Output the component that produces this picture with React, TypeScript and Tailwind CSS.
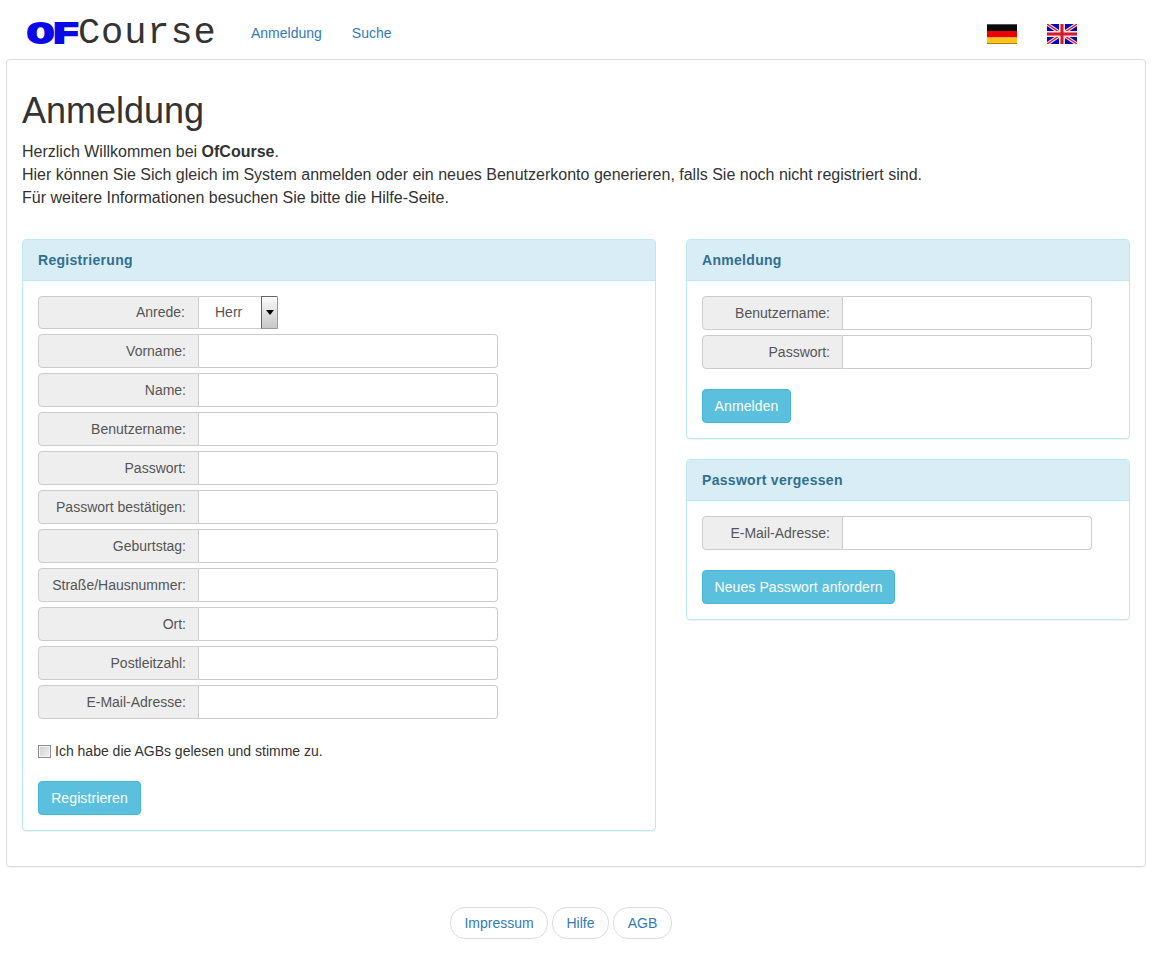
import { ReactNode } from 'react';

const REGISTER_FIELDS = [
  'Vorname:',
  'Name:',
  'Benutzername:',
  'Passwort:',
  'Passwort bestätigen:',
  'Geburtstag:',
  'Straße/Hausnummer:',
  'Ort:',
  'Postleitzahl:',
  'E-Mail-Adresse:',
];

const FOOTER_LINKS = [
  { label: 'Impressum', width: 'w-[98px]' },
  { label: 'Hilfe', width: 'w-[57px]' },
  { label: 'AGB', width: 'w-[59px]' },
];

function GermanFlag() {
  return (
    <svg width="30" height="20" viewBox="0 0 30 20" className="block">
      <rect width="30" height="7" fill="#0a0a0a" />
      <rect width="30" height="1" fill="#555" />
      <rect y="7" width="30" height="6.5" fill="#ee0000" />
      <rect y="13.5" width="30" height="6.5" fill="#ffc31a" />
      <rect y="19" width="30" height="1" fill="#a8801a" />
    </svg>
  );
}

function BritishFlag() {
  return (
    <svg width="30" height="20" viewBox="0 0 30 20" className="block">
      <rect width="30" height="20" rx="1" fill="#0a0ab4" />
      <path d="M0 0 30 20M30 0 0 20" stroke="#f4dcdc" strokeWidth="3.5" />
      <path d="M0 0 30 20M30 0 0 20" stroke="#d01c2c" strokeWidth="1.2" />
      <path d="M15 0V20M0 10H30" stroke="#f4dcdc" strokeWidth="6" />
      <path d="M15 0V20M0 10H30" stroke="#d01c2c" strokeWidth="3" />
    </svg>
  );
}

function InputRow({ label, labelWidth, width }: { label: string; labelWidth: string; width: string }) {
  return (
    <div className={`flex h-[34px] ${width}`}>
      <label className={`flex ${labelWidth} shrink-0 items-center justify-end rounded-l border border-[#ccc] bg-[#eee] pr-3 text-sm text-[#555]`}>
        {label}
      </label>
      <input className="min-w-0 flex-1 rounded-r border border-l-0 border-[#ccc] bg-white px-3 text-sm text-[#555]" />
    </div>
  );
}

function InfoPanel({ title, children, className = '' }: { title: string; children: ReactNode; className?: string }) {
  return (
    <div className={`rounded border border-[#bce8f1] bg-white shadow-[0_1px_1px_rgba(0,0,0,0.05)] ${className}`}>
      <div className="flex h-[41px] items-center rounded-t-[3px] border-b border-[#bce8f1] bg-[#d9edf7] px-[15px] text-sm font-bold tracking-[0.3px] text-[#31708f]">
        {title}
      </div>
      <div className="p-[15px]">{children}</div>
    </div>
  );
}

function InfoButton({ children, width }: { children: ReactNode; width: string }) {
  return (
    <button className={`block h-[34px] ${width} rounded border border-[#46b8da] bg-[#5bc0de] text-center text-sm tracking-[0.1px] text-white`}>
      {children}
    </button>
  );
}

export default function App() {
  return (
    <div className="bg-white font-['Liberation_Sans',Arial,sans-serif] text-sm text-[#333]">
      <nav className="flex h-[59px] items-center pt-[7px] pl-[27px]">
        <a className="flex w-[224px] items-baseline font-['Liberation_Mono',monospace] leading-none">
          <span className="inline-block w-[51px] origin-left scale-x-[1.5] text-[30px] font-bold tracking-[-1px] text-[#0a0ae6] [-webkit-text-stroke:2px_#0a0ae6]">
            OF
          </span>
          <span className="text-[37px] tracking-[0.9px] text-[#333]">Course</span>
        </a>
        <div className="flex gap-[30px] text-sm text-[#337ab7]">
          <a>Anmeldung</a>
          <a>Suche</a>
        </div>
        <div className="mt-[2px] ml-auto flex gap-[30px] pr-[77px]">
          <GermanFlag />
          <BritishFlag />
        </div>
      </nav>

      <main className="ml-[6px] w-[1140px] rounded border border-[#ddd] bg-white p-[15px] pb-[35px] shadow-[0_1px_1px_rgba(0,0,0,0.05)]">
        <h1 className="mt-[16px] mb-[9px] text-[36px] leading-[40px] font-medium text-[#333]">Anmeldung</h1>
        <p className="text-base leading-[23px]">
          Herzlich Willkommen bei <b>OfCourse</b>.<br />
          Hier können Sie Sich gleich im System anmelden oder ein neues Benutzerkonto generieren, falls Sie noch nicht registriert sind.
          <br />
          Für weitere Informationen besuchen Sie bitte die Hilfe-Seite.
        </p>

        <div className="mt-[30px] flex gap-[30px]">
          <InfoPanel title="Registrierung" className="w-[634px]">
            <div className="flex flex-col gap-[5px]">
              <div className="flex h-[33px] w-[240px]">
                <label className="flex w-[161px] shrink-0 items-center justify-end rounded-l border border-[#ccc] bg-[#eee] pr-[13px] pb-px text-sm text-[#555]">
                  Anrede:
                </label>
                <div className="flex flex-1 items-center justify-between border-y border-[#ccc] bg-white pb-px pl-4 text-sm text-[#555]">
                  Herr
                  <span className="-my-px flex h-[33px] w-[17px] items-center justify-center rounded-r-[2px] border border-[#666] border-r-[#999] border-b-[#999] bg-gradient-to-b from-[#fafafa] to-[#c8c8c8]">
                    <span className="border-x-4 border-t-[5px] border-x-transparent border-t-black" />
                  </span>
                </div>
              </div>
              {REGISTER_FIELDS.map((field) => (
                <InputRow key={field} label={field} labelWidth="w-[161px]" width="w-[460px]" />
              ))}
            </div>
            <label className="mt-[22px] flex h-5 items-center text-sm">
              <input
                type="checkbox"
                className="mr-[4px] h-[13px] w-[13px] appearance-none border border-[#8e8e8e] bg-gradient-to-br from-[#cfcfcf] to-[#f2f2f2] shadow-[inset_0_0_0_1px_#f4f4f4]"
              />
              Ich habe die AGBs gelesen und stimme zu.
            </label>
            <div className="mt-5">
              <InfoButton width="w-[103px]">Registrieren</InfoButton>
            </div>
          </InfoPanel>

          <div className="flex w-[444px] flex-col items-stretch gap-5 self-start">
            <InfoPanel title="Anmeldung">
              <div className="flex flex-col gap-[5px]">
                <InputRow label="Benutzername:" labelWidth="w-[141px]" width="w-[390px]" />
                <InputRow label="Passwort:" labelWidth="w-[141px]" width="w-[390px]" />
              </div>
              <div className="mt-5">
                <InfoButton width="w-[89px]">Anmelden</InfoButton>
              </div>
            </InfoPanel>
            <InfoPanel title="Passwort vergessen">
              <InputRow label="E-Mail-Adresse:" labelWidth="w-[141px]" width="w-[390px]" />
              <div className="mt-5">
                <InfoButton width="w-[193px]">Neues Passwort anfordern</InfoButton>
              </div>
            </InfoPanel>
          </div>
        </div>
      </main>

      <footer className="mt-10 flex justify-center gap-1 pr-[32px] pb-[14px] text-sm text-[#337ab7]">
        {FOOTER_LINKS.map((link) => (
          <a key={link.label} className={`${link.width} rounded-[15px] border border-[#ddd] bg-white py-[5px] text-center leading-5`}>
            {link.label}
          </a>
        ))}
      </footer>
    </div>
  );
}
